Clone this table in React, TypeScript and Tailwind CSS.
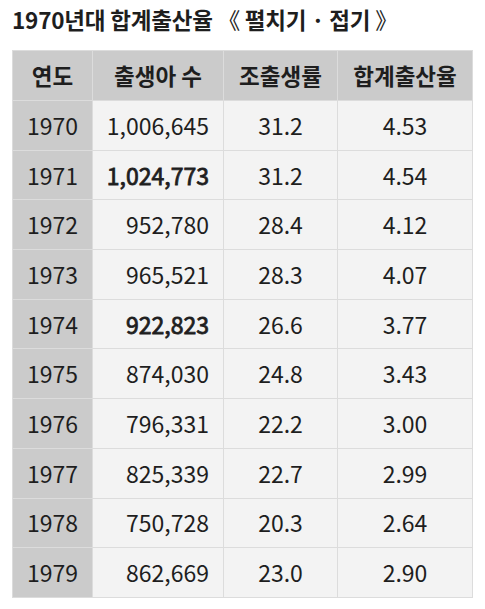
const rows: [string, string, string, string, boolean][] = [
  ["1970", "1,006,645", "31.2", "4.53", false],
  ["1971", "1,024,773", "31.2", "4.54", true],
  ["1972", "952,780", "28.4", "4.12", false],
  ["1973", "965,521", "28.3", "4.07", false],
  ["1974", "922,823", "26.6", "3.77", true],
  ["1975", "874,030", "24.8", "3.43", false],
  ["1976", "796,331", "22.2", "3.00", false],
  ["1977", "825,339", "22.7", "2.99", false],
  ["1978", "750,728", "20.3", "2.64", false],
  ["1979", "862,669", "23.0", "2.90", false],
];

export default function App() {
  return (
    <div
      className="w-[485px] h-[609px] bg-white text-[#1e1e1e] px-3 pt-[3px]"
      style={{ fontFamily: '"Noto Sans CJK KR", "Noto Sans", sans-serif' }}
    >
      <h2 className="text-[22.5px] font-bold leading-[33px] tracking-[-0.2px]">
        1970년대 합계출산율 <span className="font-normal">《</span> 펼치기 · 접기 <span className="font-normal">》</span>
      </h2>
      <table className="mt-[14px] w-[461px] border-collapse text-[23px] leading-[27px]">
        <thead>
          <tr className="h-[50px] bg-[#cbcbcb] text-[22.5px]">
            <th className="w-[80px] border border-[#dcdcdc] font-bold">연도</th>
            <th className="w-[131px] border border-[#dcdcdc] font-bold">출생아 수</th>
            <th className="w-[114px] border border-[#dcdcdc] font-bold">조출생률</th>
            <th className="border border-[#dcdcdc] font-bold">합계출산율</th>
          </tr>
        </thead>
        <tbody>
          {rows.map(([y, b, c, t, bold]) => (
            <tr key={y} className="h-[49.7px]">
              <td className="border border-[#dcdcdc] bg-[#cbcbcb] text-center">{y}</td>
              <td
                className={
                  "border border-[#dcdcdc] bg-[#f3f3f3] text-right pr-[14px] " +
                  (bold ? "[-webkit-text-stroke:0.8px_#1e1e1e]" : "")
                }
              >
                {b}
              </td>
              <td className="border border-[#dcdcdc] bg-[#f3f3f3] text-center">{c}</td>
              <td className="border border-[#dcdcdc] bg-[#f3f3f3] text-center">{t}</td>
            </tr>
          ))}
        </tbody>
      </table>
    </div>
  );
}
